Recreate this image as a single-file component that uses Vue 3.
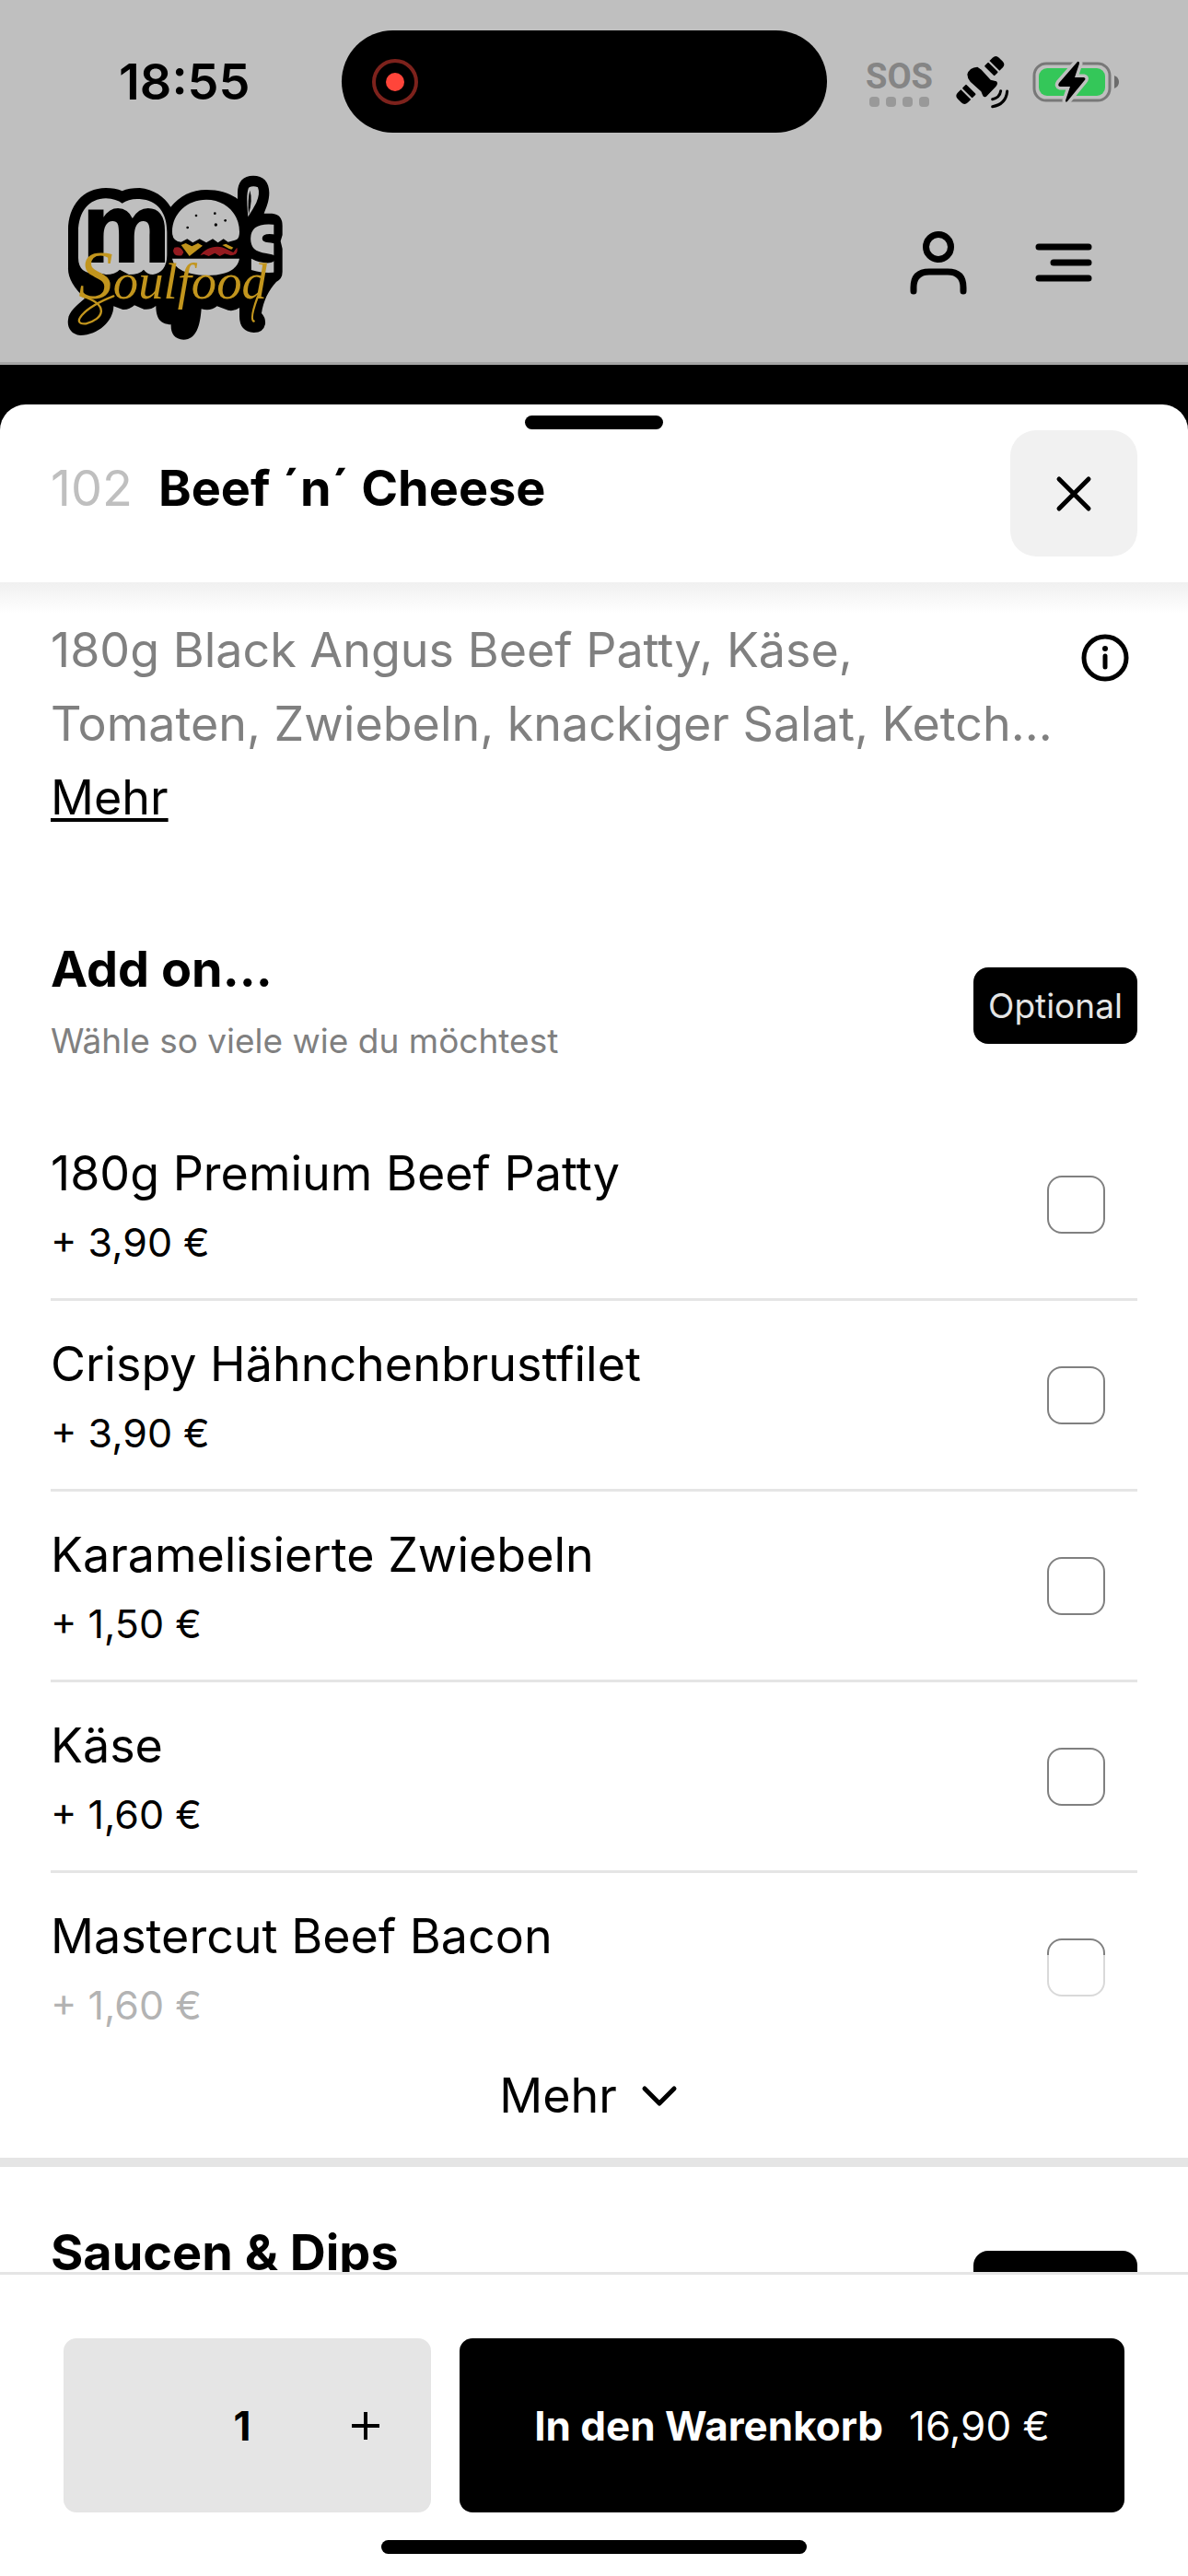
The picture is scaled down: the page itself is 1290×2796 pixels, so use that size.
<script setup>
import { ref } from 'vue'

const quantity = ref(1)

const groups = ref([
  {
    id: 'addon',
    title: 'Add on...',
    hint: 'Wähle so viele wie du möchtest',
    badge: 'Optional',
    items: [
      { id: 'patty', name: '180g Premium Beef Patty', price: '+ 3,90 €', checked: false },
      { id: 'chicken', name: 'Crispy Hähnchenbrustfilet', price: '+ 3,90 €', checked: false },
      { id: 'onions', name: 'Karamelisierte Zwiebeln', price: '+ 1,50 €', checked: false },
      { id: 'cheese', name: 'Käse', price: '+ 1,60 €', checked: false },
      { id: 'bacon', name: 'Mastercut Beef Bacon', price: '+ 1,60 €', checked: false },
    ],
  },
  { id: 'dips', title: 'Saucen & Dips', hint: '', badge: 'Optional', items: [] },
])
</script>

<template>
  <div class="screen">
    <div class="backdrop">
      <div class="status">
        <time class="clock">18:55</time>
        <div class="island">
          <svg width="52" height="52" viewBox="0 0 52 52" aria-hidden="true">
            <circle cx="26" cy="26" r="23" fill="none" stroke="#7d221c" stroke-width="4" />
            <circle cx="26" cy="26" r="10" fill="#ff453a" />
          </svg>
        </div>
        <div class="indicators">
          <div class="sos">
            <span>SOS</span>
            <div class="dots"><i></i><i></i><i></i><i></i></div>
          </div>
          <svg class="satellite" width="60" height="58" viewBox="408 86 180 174" aria-hidden="true">
            <g transform="rotate(-45 490 167)">
              <path d="M556 144h14q15 0 15 15v16q0 15-15 15h-14z" />
              <rect x="532" y="144" width="18" height="46" rx="3" />
              <rect x="430" y="144" width="18" height="46" rx="3" />
              <path d="M424 144h-14q-15 0-15 15v16q0 15 15 15h14z" />
            </g>
            <path d="M448 148Q454 126 481 124L494 133 524 166 543 171Q550 178 541 188L510 220Q501 225 498 216L493 204 458 172Q448 160 448 148Z" />
            <path d="M557 202Q554 224 530 229M578 203Q574 246 530 253" fill="none" stroke="#000" stroke-width="9" stroke-linecap="round" />
          </svg>
          <svg class="battery" width="94" height="46" viewBox="0 0 94 46" aria-hidden="true">
            <rect x="2" y="3" width="82" height="40" rx="13" fill="none" stroke="#787878" stroke-width="3" />
            <rect x="7" y="8" width="72" height="30" rx="9" fill="#34c759" />
            <path d="M89 16Q94 18 94 23T89 30Z" fill="#6c6c6c" />
            <path d="M49 1Q51 0 51 3L46 18H56Q59 19 56 22L38 44Q36 46 36 43L41 28H30Q27 27 29 24Z" fill="#000" stroke="#bfbfbf" stroke-width="7" paint-order="stroke" />
          </svg>
        </div>
      </div>

      <header class="site-bar">
        <a href="#" class="logo" aria-label="Mo's Soulfood">
          <svg width="260" height="200" viewBox="0 0 780 600">
            <clipPath id="logo-edge"><rect x="630" y="180" width="82" height="180" /></clipPath>
            <path d="M42 330V210C42 130 90 72 165 72Q195 72 218 82 240 72 275 72C320 76 355 100 376 134 405 98 445 78 492 78 535 78 570 90 594 108V88C594 52 612 32 645 32S697 52 697 88C697 115 688 135 680 155H706Q740 158 740 195V225L734 245 740 270V345Q740 368 720 378C695 405 678 440 672 480Q686 495 684 515 678 543 647 543 600 540 600 490V462Q580 475 563 470L527 457Q505 475 476 466C472 520 460 566 418 566 388 564 376 545 377 517 345 515 328 500 328 456Q310 470 289 467L258 454Q240 470 220 468L190 457C190 505 140 552 82 552 50 548 38 525 42 500 44 475 70 455 96 432 60 395 40 365 42 330Z" />
            <path d="M75 215C75 150 110 106 165 106Q200 108 218 122 240 106 275 108C335 112 364 155 364 215V290C364 330 345 350 318 354Q300 354 288 338 275 354 240 354L210 338Q195 354 165 354L140 348C110 355 75 345 75 300Z" fill="#bfbfbf" />
            <text class="letter" x="84" y="315" font-size="315">m</text>
            <path d="M381 215C381 155 430 110 492 110S600 155 600 215Q600 240 585 242L563 248 548 238 530 250 513 238 492 250 470 238 448 250 430 238 410 248Q381 246 381 215Z" fill="#bfbfbf" />
            <g>
              <circle cx="459" cy="162" r="4" /><circle cx="520" cy="155" r="4" />
              <circle cx="554" cy="178" r="4" /><circle cx="523" cy="192" r="5" />
              <circle cx="431" cy="201" r="4" />
            </g>
            <path d="M388 266Q410 260 418 282L412 292Q385 296 384 276ZM472 292C490 265 530 254 560 272L580 282 592 266Q598 290 572 292L552 286 536 294 520 284 500 294 484 288Z" fill="#941a1f" />
            <path d="M410 258L425 252 445 262 465 252 480 260 437 294ZM544 258L556 254 580 266 574 272 566 270Z" fill="#c2951d" />
            <path d="M381 302H600Q590 356 492 357 390 352 381 302Z" fill="#bfbfbf" />
            <path d="M628 166Q620 80 632 70 645 64 660 70 668 90 655 120 645 140 628 166Z" fill="#bfbfbf" />
            <path d="M634 80Q626 110 630 158 644 110 634 80Z" />
            <g clip-path="url(#logo-edge)">
              <text class="letter pale" x="624" y="344" font-size="270">s</text>
            </g>
            <text class="script" x="76" y="432"><tspan font-size="225">S</tspan><tspan>oulfood</tspan></text>
            <path class="flourish" d="M90 425C180 455 155 500 100 514 50 518 85 465 190 424M660 425Q632 500 647 506" />
          </svg>
        </a>
        <nav class="site-actions">
          <button type="button" class="plain" aria-label="Konto">
            <svg width="62" height="70" viewBox="0 0 62 70" fill="none" stroke="#000" stroke-width="7" stroke-linecap="round">
              <circle cx="31" cy="18" r="13.5" />
              <path d="M4 66V62Q4 45 21 45H41Q58 45 58 62V66" />
            </svg>
          </button>
          <button type="button" class="plain" aria-label="Menü">
            <svg width="62" height="70" viewBox="0 0 62 70" fill="none" stroke="#000" stroke-width="7" stroke-linecap="round">
              <path d="M4 18H58M20 35H58M4 52H58" />
            </svg>
          </button>
        </nav>
      </header>
    </div>

    <main class="sheet">
      <span class="grabber"></span>
      <header class="sheet-head">
        <h1><span class="number">102</span>Beef ´n´ Cheese</h1>
        <button type="button" class="close" aria-label="Schließen">
          <svg width="40" height="40" viewBox="0 0 40 40" fill="none" stroke="#000" stroke-width="5" stroke-linecap="round">
            <path d="M4 4L36 36M36 4L4 36" />
          </svg>
        </button>
      </header>

      <div class="content">
        <section class="intro">
          <div class="description">
            <p>180g Black Angus Beef Patty, Käse,<br>Tomaten, Zwiebeln, knackiger Salat, Ketch...</p>
            <a href="#">Mehr</a>
          </div>
          <button type="button" class="plain info" aria-label="Allergene">
            <svg width="52" height="52" viewBox="0 0 52 52">
              <circle cx="26" cy="26" r="23" fill="none" stroke="#000" stroke-width="5" />
              <circle cx="26" cy="16" r="3" />
              <path d="M26 24V36" stroke="#000" stroke-width="5" stroke-linecap="round" />
            </svg>
          </button>
        </section>

        <section v-for="group in groups" :key="group.id" class="group">
          <div class="group-head">
            <div>
              <h2>{{ group.title }}</h2>
              <p>{{ group.hint }}</p>
            </div>
            <span class="badge">{{ group.badge }}</span>
          </div>
          <ul v-if="group.items.length">
            <li v-for="item in group.items" :key="item.id">
              <label :for="item.id">
                <span class="name">{{ item.name }}</span>
                <span class="price">{{ item.price }}</span>
              </label>
              <input :id="item.id" v-model="item.checked" type="checkbox">
            </li>
          </ul>
          <button v-if="group.items.length" type="button" class="plain more">
            Mehr
            <svg width="40" height="24" viewBox="0 0 40 24" fill="none" stroke="#000" stroke-width="5" stroke-linecap="round" stroke-linejoin="round">
              <path d="M4 4L20 20 36 4" />
            </svg>
          </button>
        </section>
      </div>

      <footer class="checkout">
        <div class="controls">
          <div class="stepper">
            <output>{{ quantity }}</output>
            <button type="button" class="plain" aria-label="Anzahl erhöhen" @click="quantity++">
              <svg width="30" height="30" viewBox="0 0 30 30" stroke="#000" stroke-width="4">
                <path d="M0 15H30M15 0V30" />
              </svg>
            </button>
          </div>
          <button type="button" class="cart"><strong>In den Warenkorb</strong><span>16,90 €</span></button>
        </div>
        <span class="home"></span>
      </footer>
    </main>
  </div>
</template>

<style>
body {
  margin: 0;
  background: #000;
}
</style>

<style scoped>
* {
  box-sizing: border-box;
  margin: 0;
}

.screen {
  display: flex;
  flex-direction: column;
  height: 100vh;
  background: #000;
  color: #000;
  font-family: Inter, "Liberation Sans", sans-serif;
}

svg {
  display: block;
  flex: none;
}

button {
  border: 0;
  padding: 0;
  color: inherit;
  font: inherit;
}

.plain {
  background: none;
}

.backdrop {
  background: #bfbfbf;
  border-bottom: 3px solid #a6a6a6;
}

.status {
  display: flex;
  align-items: center;
  height: 177px;
  padding: 0 75px 0 129px;
}

.clock {
  width: 242px;
  font-size: 54px;
  font-weight: 600;
  line-height: 64px;
}

.island {
  display: flex;
  align-items: center;
  width: 527px;
  height: 111px;
  padding-left: 32px;
  border-radius: 56px;
  background: #000;
}

.indicators {
  display: flex;
  align-items: center;
  gap: 24px;
  margin-left: auto;
}

.sos {
  color: #858585;
  font-family: Roboto, sans-serif;
  font-size: 38px;
  font-weight: 700;
  line-height: 44px;
  text-align: center;
}

.dots {
  display: flex;
  justify-content: center;
  gap: 7px;
}

.dots i {
  width: 11px;
  height: 11px;
  border-radius: 4px;
  background: #999;
}

.site-bar {
  display: flex;
  align-items: center;
  justify-content: space-between;
  height: 216px;
  padding: 0 104px 0 60px;
}

.logo {
  margin-bottom: 10px;
}

.letter {
  font-family: "DejaVu Sans Condensed", sans-serif;
  font-weight: 700;
}

.pale {
  fill: #bfbfbf;
}

.script {
  fill: #c2951d;
  font-family: "Liberation Serif", serif;
  font-size: 164px;
  font-style: italic;
}

.flourish {
  fill: none;
  stroke: #c2951d;
  stroke-width: 7;
  stroke-linecap: round;
}

.site-actions {
  display: flex;
  gap: 74px;
}

.sheet {
  position: relative;
  display: flex;
  flex: 1;
  flex-direction: column;
  min-height: 0;
  margin-top: 43px;
  border-radius: 28px 28px 0 0;
  background: #fff;
}

.grabber {
  position: absolute;
  top: 12px;
  left: 50%;
  width: 150px;
  height: 15px;
  margin-left: -75px;
  border-radius: 8px;
  background: #000;
}

.sheet-head {
  position: relative;
  display: flex;
  align-items: center;
  justify-content: space-between;
  padding: 28px 55px;
}

.sheet-head::after {
  position: absolute;
  top: 100%;
  right: 0;
  left: 0;
  height: 34px;
  background: linear-gradient(#f0f0f0, #fff);
  content: "";
}

h1 {
  padding-bottom: 12px;
  font-size: 54px;
  font-weight: 700;
  line-height: 64px;
}

.number {
  margin-right: 28px;
  color: #bfbfbf;
  font-weight: 400;
}

.close {
  display: grid;
  place-items: center;
  width: 138px;
  height: 137px;
  border-radius: 28px;
  background: #f1f1f1;
}

.content {
  flex: 1 1 0;
  min-height: 0;
  overflow: hidden;
}

.intro {
  display: flex;
  align-items: flex-start;
  justify-content: space-between;
  padding: 34px 64px 53px 55px;
}

.description {
  font-size: 52px;
  line-height: 80px;
  white-space: nowrap;
}

.description p {
  color: #808080;
}

.description a {
  color: #000;
  text-decoration-thickness: 4px;
  text-underline-offset: 4px;
}

.info {
  margin-top: 22px;
}

.group + .group {
  border-top: 10px solid #e5e5e5;
}

.group-head {
  display: flex;
  align-items: center;
  justify-content: space-between;
  padding: 61px 55px 43px;
}

h2 {
  margin-bottom: 14px;
  font-size: 54px;
  font-weight: 700;
  line-height: 64px;
}

.group-head p {
  min-height: 64px;
  color: #808080;
  font-size: 37px;
  line-height: 64px;
}

.badge {
  width: 178px;
  border-radius: 16px;
  background: #000;
  color: #e5e5e5;
  font-size: 37px;
  line-height: 83px;
  text-align: center;
}

ul {
  padding: 0 55px;
  list-style: none;
}

li {
  position: relative;
  display: flex;
  align-items: center;
  justify-content: space-between;
  padding: 33px 35px 33px 0;
  border-bottom: 3px solid #e5e5e5;
}

li:last-child {
  border-bottom: 0;
}

li:last-child::after {
  position: absolute;
  inset: 89px 0 0;
  background: rgba(255, 255, 255, 0.7);
  content: "";
  pointer-events: none;
}

label {
  display: flex;
  flex-direction: column;
  gap: 10px;
}

.name {
  font-size: 52px;
  line-height: 72px;
}

.price {
  font-size: 43px;
  line-height: 56px;
}

input {
  width: 63px;
  height: 63px;
  border: 2px solid #808080;
  border-radius: 16px;
  appearance: none;
}

input:checked {
  background: #000;
}

.more {
  display: flex;
  align-items: center;
  justify-content: center;
  gap: 26px;
  width: 100%;
  padding: 2px 12px 31px 0;
  font-size: 52px;
  line-height: 72px;
}

.checkout {
  padding: 69px 69px 24px;
  border-top: 3px solid #e5e5e5;
}

.controls {
  display: flex;
  gap: 31px;
  height: 189px;
}

.stepper {
  display: grid;
  grid-template-columns: 132px 1fr;
  align-items: center;
  width: 399px;
  padding-right: 4px;
  padding-left: 128px;
  border-radius: 14px;
  background: #e5e5e5;
}

.stepper output {
  font-size: 44px;
  font-weight: 700;
  text-align: center;
}

.stepper .plain {
  display: grid;
  place-items: center;
  height: 100%;
}

.cart {
  display: flex;
  flex: 1;
  align-items: center;
  justify-content: center;
  gap: 28px;
  border-radius: 14px;
  background: #000;
  color: #fff;
  font-size: 44px;
}

.home {
  display: block;
  width: 462px;
  height: 15px;
  margin: 30px auto 0;
  border-radius: 8px;
  background: #000;
}
</style>
